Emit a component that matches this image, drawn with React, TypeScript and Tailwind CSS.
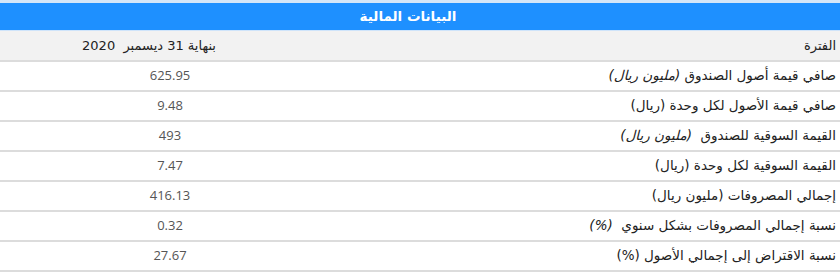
import React from 'react';

interface Row {
  label: React.ReactNode;
  value: string;
}

const unit = (t: string) => <i className="italic">{t}</i>;

const rows: Row[] = [
  { label: <>صافي قيمة أصول الصندوق {unit('(مليون ريال)')}</>, value: '625.95' },
  { label: 'صافي قيمة الأصول لكل وحدة (ريال)', value: '9.48' },
  { label: <>القيمة السوقية للصندوق&nbsp; {unit('(مليون ريال)')}</>, value: '493' },
  { label: 'القيمة السوقية لكل وحدة (ريال)', value: '7.47' },
  { label: 'إجمالي المصروفات (مليون ريال)', value: '416.13' },
  { label: <>نسبة إجمالي المصروفات بشكل سنوي&nbsp; {unit('(%)')}</>, value: '0.32' },
  { label: 'نسبة الاقتراض إلى إجمالي الأصول (%)', value: '27.67' },
];

export default function App() {
  return (
    <div className="w-[840px] h-[278px] bg-white overflow-hidden font-['DejaVu_Sans',sans-serif]" dir="rtl">
      <table className="w-full border-collapse border-t-[3px] border-[#d4e6f8]">
        <thead>
          <tr>
            <th
              colSpan={2}
              className="h-[29px] bg-[#1e90ff] text-white text-[13.5px] font-bold text-center pr-[24px] border-b border-[#cfe4fa]"
            >
              البيانات المالية
            </th>
          </tr>
          <tr className="bg-[#f2f2f2]">
            <th className="h-[30px] w-[500px] text-right pr-[4px] font-normal text-[13px] text-[#222] border-b-2 border-[#dcdcdc]">
              الفترة
            </th>
            <th className="h-[30px] text-center pr-[42px] font-normal text-[13px] text-[#222] border-b-2 border-[#dcdcdc]">
              بنهاية 31 ديسمبر&nbsp; 2020
            </th>
          </tr>
        </thead>
        <tbody>
          {rows.map((r, i) => (
            <tr key={i}>
              <td className="h-[30px] text-right pr-[4px] text-[13.5px] text-[#222] border-b-2 border-[#dcdcdc]">
                {r.label}
              </td>
              <td className="h-[30px] text-center text-[13px] text-[#555] border-b-2 border-[#dcdcdc] font-['Open_Sans',sans-serif]">
                {r.value}
              </td>
            </tr>
          ))}
        </tbody>
      </table>
    </div>
  );
}
